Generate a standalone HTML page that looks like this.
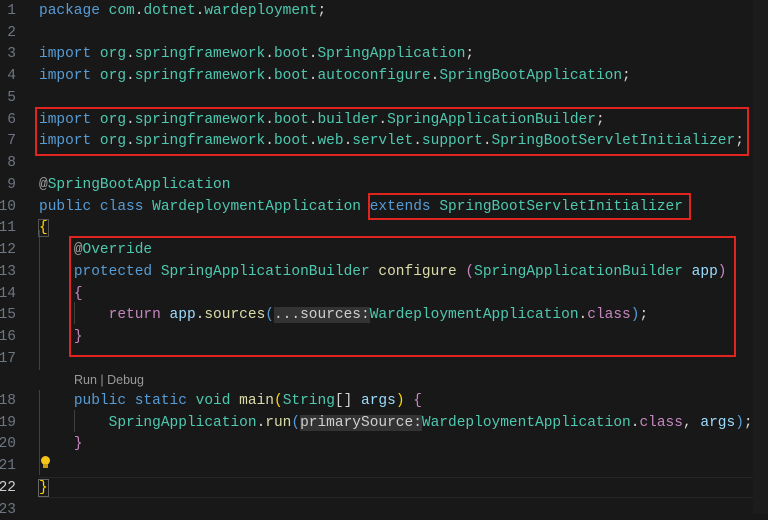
<!DOCTYPE html>
<html><head><meta charset="utf-8"><style>
body{margin:0;width:768px;height:514px;background:#181818;overflow:hidden;position:relative;font-family:"Liberation Mono",monospace;font-size:14.5px}
.l{position:absolute;left:39px;white-space:pre;color:#d4d4d4;line-height:20px;margin-top:1px}
.n{position:absolute;left:-20px;width:36px;text-align:right;color:#6e7681;line-height:20px;font-size:14.5px;margin-top:1px}
.k{color:#569cd6}.t{color:#4ec9b0}.p{color:#c586c0}.v{color:#9cdcfe}.f{color:#dcdcaa}.y{color:#ffd700}.g{color:#a0a0a0}
.h{background:#333;color:#cfcfcf}
.box{position:absolute;border:2px solid #e0241f;box-sizing:border-box}
.guide{position:absolute;left:39px;width:1px;background:#404040}
</style></head><body>
<div style="position:absolute;left:753px;top:0;width:15px;height:514px;background:#1c1c1c"></div>
<div style="position:absolute;left:39px;top:477px;width:714px;height:21px;border-top:1px solid #262626;border-bottom:1px solid #262626;box-sizing:border-box"></div>
<div class="guide" style="top:230px;height:140px"></div>
<div class="guide" style="top:390px;height:85px"></div>
<div class="guide" style="left:74px;top:302px;height:22px"></div>
<div class="guide" style="left:74px;top:410px;height:22px"></div>

<div class="n" style="top:0">1</div><div class="l" style="top:0"><span class="k">package</span> <span class="t">com</span>.<span class="t">dotnet</span>.<span class="t">wardeployment</span>;</div>
<div class="n" style="top:22px">2</div>
<div class="n" style="top:43px">3</div><div class="l" style="top:43px"><span class="k">import</span> <span class="t">org</span>.<span class="t">springframework</span>.<span class="t">boot</span>.<span class="t">SpringApplication</span>;</div>
<div class="n" style="top:65px">4</div><div class="l" style="top:65px"><span class="k">import</span> <span class="t">org</span>.<span class="t">springframework</span>.<span class="t">boot</span>.<span class="t">autoconfigure</span>.<span class="t">SpringBootApplication</span>;</div>
<div class="n" style="top:87px">5</div>
<div class="n" style="top:109px">6</div><div class="l" style="top:109px"><span class="k">import</span> <span class="t">org</span>.<span class="t">springframework</span>.<span class="t">boot</span>.<span class="t">builder</span>.<span class="t">SpringApplicationBuilder</span>;</div>
<div class="n" style="top:130px">7</div><div class="l" style="top:130px"><span class="k">import</span> <span class="t">org</span>.<span class="t">springframework</span>.<span class="t">boot</span>.<span class="t">web</span>.<span class="t">servlet</span>.<span class="t">support</span>.<span class="t">SpringBootServletInitializer</span>;</div>
<div class="n" style="top:152px">8</div>
<div class="n" style="top:174px">9</div><div class="l" style="top:174px"><span class="g">@</span><span class="t">SpringBootApplication</span></div>
<div class="n" style="top:196px">10</div><div class="l" style="top:196px"><span class="k">public</span> <span class="k">class</span> <span class="t">WardeploymentApplication</span> <span class="k">extends</span> <span class="t">SpringBootServletInitializer</span></div>
<div class="n" style="top:217px">11</div><div class="l" style="top:217px"><span class="y" style="outline:1px solid #555">{</span></div>
<div class="n" style="top:239px">12</div><div class="l" style="top:239px">    <span class="g">@</span><span class="t">Override</span></div>
<div class="n" style="top:261px">13</div><div class="l" style="top:261px">    <span class="k">protected</span> <span class="t">SpringApplicationBuilder</span> <span class="f">configure</span> <span class="p">(</span><span class="t">SpringApplicationBuilder</span> <span class="v">app</span><span class="p">)</span></div>
<div class="n" style="top:283px">14</div><div class="l" style="top:283px">    <span class="p">{</span></div>
<div class="n" style="top:304px">15</div><div class="l" style="top:304px">        <span class="p">return</span> <span class="v">app</span>.<span class="f">sources</span><span class="k">(</span><span class="h">...sources:</span><span class="t">WardeploymentApplication</span>.<span class="p">class</span><span class="k">)</span>;</div>
<div class="n" style="top:326px">16</div><div class="l" style="top:326px">    <span class="p">}</span></div>
<div class="n" style="top:348px">17</div>
<div class="l" style="top:369px;left:74px;font-family:'Liberation Sans',sans-serif;font-size:12.5px;color:#999">Run | Debug</div>
<div class="n" style="top:390px">18</div><div class="l" style="top:390px">    <span class="k">public</span> <span class="k">static</span> <span class="t">void</span> <span class="f">main</span><span class="y">(</span><span class="t">String</span>[] <span class="v">args</span><span class="y">)</span> <span class="p">{</span></div>
<div class="n" style="top:412px">19</div><div class="l" style="top:412px">        <span class="t">SpringApplication</span>.<span class="f">run</span><span class="k">(</span><span class="h">primarySource:</span><span class="t">WardeploymentApplication</span>.<span class="p">class</span>, <span class="v">args</span><span class="k">)</span>;</div>
<div class="n" style="top:433px">20</div><div class="l" style="top:433px">    <span class="p">}</span></div>
<div class="n" style="top:455px">21</div>
<div style="position:absolute;left:41px;top:456px;width:9px;height:9px;border-radius:50%;background:#f5c518"></div>
<div style="position:absolute;left:43px;top:464px;width:5px;height:4px;background:#c99a10"></div>
<div class="n" style="top:477px;color:#ccc">22</div><div class="l" style="top:477px"><span class="y" style="outline:1px solid #666">}</span></div>
<div class="n" style="top:499px">23</div>

<div class="box" style="left:35px;top:107px;width:714px;height:49px"></div>
<div class="box" style="left:368px;top:193px;width:323px;height:27px"></div>
<div class="box" style="left:69px;top:236px;width:667px;height:121px"></div>
</body></html>
